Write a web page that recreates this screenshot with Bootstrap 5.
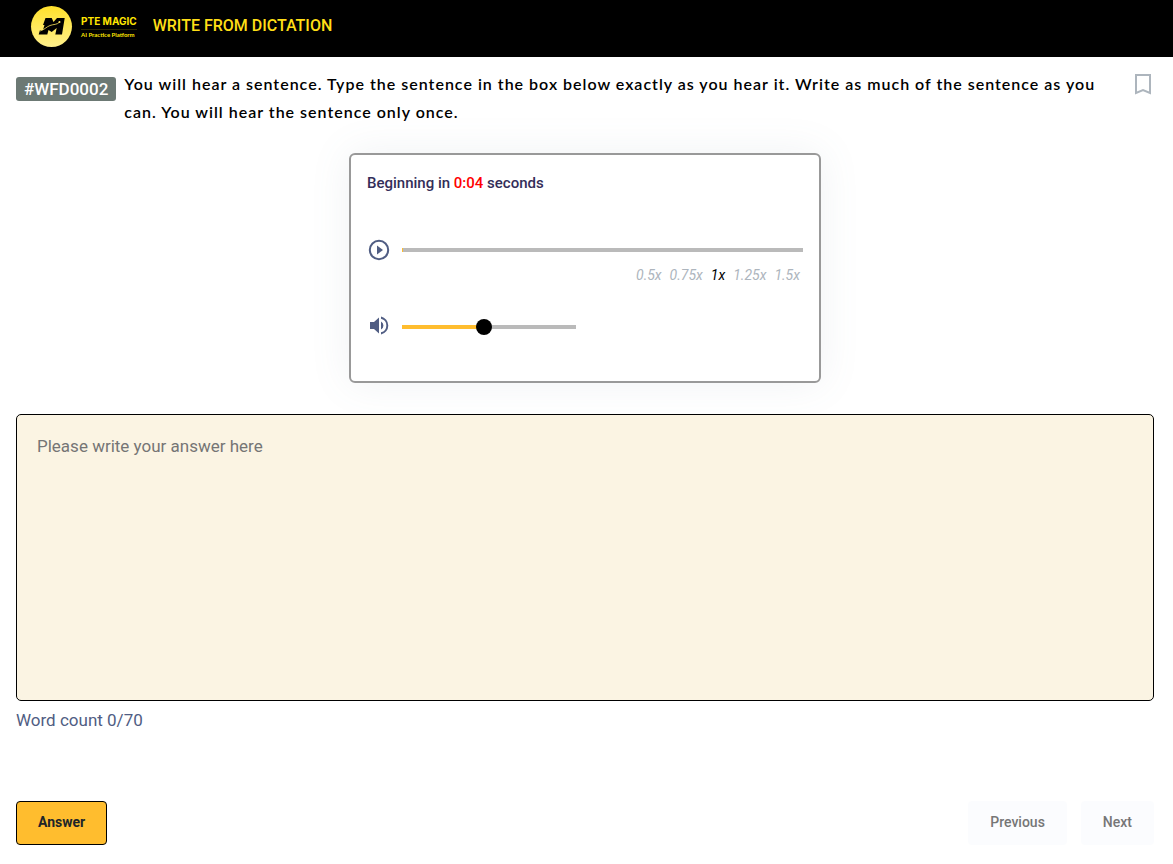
<!DOCTYPE html>
<html lang="en">
<head>
<meta charset="utf-8">
<meta name="viewport" content="width=device-width, initial-scale=1">
<title>Write From Dictation | PTE Magic</title>
<link href="https://cdn.jsdelivr.net/npm/bootstrap@5.3.0/dist/css/bootstrap.min.css" rel="stylesheet">
<style>
  body { font-family: Roboto, "Liberation Sans", sans-serif; color: #000; background: #fff; }
  .topbar { background: #000; padding: 5px 30px 9px; }
  .logo-name { font: 700 10px/12px Inter, sans-serif; color: #ffe600; }
  .logo-tag { font: 700 6px/8px Lato, sans-serif; color: #ffe600; border-top: 1px solid #2c2800; margin-top: 2px; padding-top: 1px; }
  .page-title { font-size: 16px; font-weight: 500; line-height: 20px; color: #ffde16; margin: 0 0 2px 16px; }
  .page-body { padding: 13px 19px 18px 16px; }
  .question-id { background: #6c7974; color: #fff; font-size: 17px; font-weight: 500; line-height: 24px; border-radius: 3px; padding: 0 8px; margin-top: 7px; }
  .instructions { font: 600 16px/28px Lato, sans-serif; letter-spacing: 1px; }
  .bookmark { color: #adb5bd; line-height: 0; margin-top: 3px; }
  .player { width: 472px; max-width: 100%; height: 230px; border: 2px solid #999; border-radius: 6px; padding: 18px 16px; margin: 27px auto 31px; box-shadow: 0 0 40px rgba(108, 130, 150, .1); }
  .countdown { font-size: 15px; font-weight: 500; line-height: 20px; color: #332e59; margin: 0 0 45px; }
  .countdown span { color: #f00; }
  .player-row { gap: 11px; }
  .icon-btn { width: 24px; height: 24px; color: #505d83; line-height: 0; }
  .track { appearance: none; -webkit-appearance: none; height: 16px; background: linear-gradient(to right, #ffbd2e var(--filled), #bababa var(--filled)) center / 100% 4px no-repeat; margin: 0; }
  .track::-webkit-slider-thumb { -webkit-appearance: none; width: 16px; height: 16px; border-radius: 50%; background: #000; }
  .track.seek::-webkit-slider-thumb { background: transparent; }
  .volume { width: 174px; }
  .speeds { padding: 3px 3px 0 0; margin-bottom: 30px; }
  .speed { font-size: 14px; font-style: italic; font-weight: 400; line-height: 20px; color: #adb5bd; }
  .speed.current { color: #000; }
  .answer-box { display: block; width: 100%; height: 287px; resize: none; background: #fbf4e3; border: 1px solid #000; border-radius: 5px; padding: 19px 20px; font-size: 17px; line-height: 24px; }
  .answer-box::placeholder { color: #757575; }
  .word-count { font-size: 17px; line-height: 24px; color: #505d83; margin: 7px 0 69px; }
  .actions { gap: 14px; }
  .action { height: 44px; border-radius: 4px; padding: 0 21px 2px; font-size: 14px; font-weight: 500; color: #767676; background: #fbfcfe; border: 1px solid #fbfcfe; }
  .action.reveal { color: #212529; background: #ffbd2e; border-color: #000; font-weight: 700; }
</style>
</head>
<body>
<header class="topbar d-flex align-items-center">
  <a href="#" class="d-flex align-items-center text-decoration-none" aria-label="PTE Magic">
    <svg width="43" height="43" viewBox="0 0 43 43" aria-hidden="true">
      <defs><linearGradient id="sun" x1="0" y1="0" x2="0" y2="1"><stop offset="0" stop-color="#ffe02b"/><stop offset="1" stop-color="#fff08c"/></linearGradient></defs>
      <circle cx="21.500" cy="21.500" r="20.500" fill="url(#sun)"/>
      <path fill="#000" d="M15.500 13H21.700L23.500 17L27 13H34.700L32 29.500H25.300L26.700 23L21.700 27L18.500 25L17.300 29.500H8.700L10 25H13L14.500 20H13Z"/>
      <path fill="none" stroke="#ffea60" stroke-width=".8" d="M10 26C15 24.500 16 22 20 20.500S27 20 29.500 17"/>
      <circle cx="29.500" cy="17" r="1" fill="#ffea60"/>
    </svg>
    <div class="ms-2">
      <div class="logo-name">PTE MAGIC</div>
      <div class="logo-tag">AI Practice Platform</div>
    </div>
  </a>
  <h1 class="page-title">WRITE FROM DICTATION</h1>
</header>

<main class="page-body">
  <div class="d-flex align-items-start">
    <span class="question-id flex-shrink-0">#WFD0002</span>
    <p class="instructions flex-grow-1 mb-0 mx-2">You will hear a sentence. Type the sentence in the box below exactly as you hear it. Write as much of the sentence as you can. You will hear the sentence only once.</p>
    <button type="button" class="bookmark btn p-0 border-0 flex-shrink-0" aria-label="Bookmark">
      <svg width="22" height="24" viewBox="0 0 22 24" fill="none" stroke="currentColor" stroke-width="2"><path d="M4 2H18V20L11 17L4 20Z"/></svg>
    </button>
  </div>

  <section class="player" aria-label="Audio player">
    <p class="countdown">Beginning in <span>0:04</span> seconds</p>
    <div class="player-row d-flex align-items-center">
      <button type="button" class="icon-btn btn p-0 border-0" aria-label="Play">
        <svg width="24" height="24" viewBox="0 0 24 24"><circle cx="12" cy="12" r="9.200" fill="none" stroke="currentColor" stroke-width="2"/><path fill="currentColor" d="M10 7.500V16.500L16 12Z"/></svg>
      </button>
      <input type="range" class="track seek flex-grow-1" style="--filled:0.25%" min="0" max="100" value="0" aria-label="Position">
    </div>
    <div class="speeds d-flex justify-content-end gap-2">
      <button type="button" class="speed btn p-0 border-0">0.5x</button>
      <button type="button" class="speed btn p-0 border-0">0.75x</button>
      <button type="button" class="speed current btn p-0 border-0">1x</button>
      <button type="button" class="speed btn p-0 border-0">1.25x</button>
      <button type="button" class="speed btn p-0 border-0">1.5x</button>
    </div>
    <div class="player-row d-flex align-items-center">
      <button type="button" class="icon-btn btn p-0 border-0" aria-label="Mute">
        <svg width="24" height="24" viewBox="0 0 24 24"><path fill="currentColor" d="M3 7V14H7L12 18.500V2.500L7 7ZM14 6.500V14.500A4.500 4.500 0 0 0 14 6.500ZM14 1.500V3.700A7 7 0 0 1 14 17.300V19.500A9.200 9.200 0 0 0 14 1.500Z"/></svg>
      </button>
      <input type="range" class="track volume" style="--filled:48%" min="0" max="100" value="47" aria-label="Volume">
    </div>
  </section>

  <textarea class="answer-box" placeholder="Please write your answer here" aria-label="Your answer"></textarea>
  <p class="word-count">Word count 0/70</p>

  <div class="actions d-flex align-items-center">
    <button type="button" class="action reveal btn me-auto">Answer</button>
    <button type="button" class="action btn">Previous</button>
    <button type="button" class="action btn">Next</button>
  </div>
</main>
<script src="https://cdn.jsdelivr.net/npm/bootstrap@5.3.0/dist/js/bootstrap.bundle.min.js"></script>
</body>
</html>
